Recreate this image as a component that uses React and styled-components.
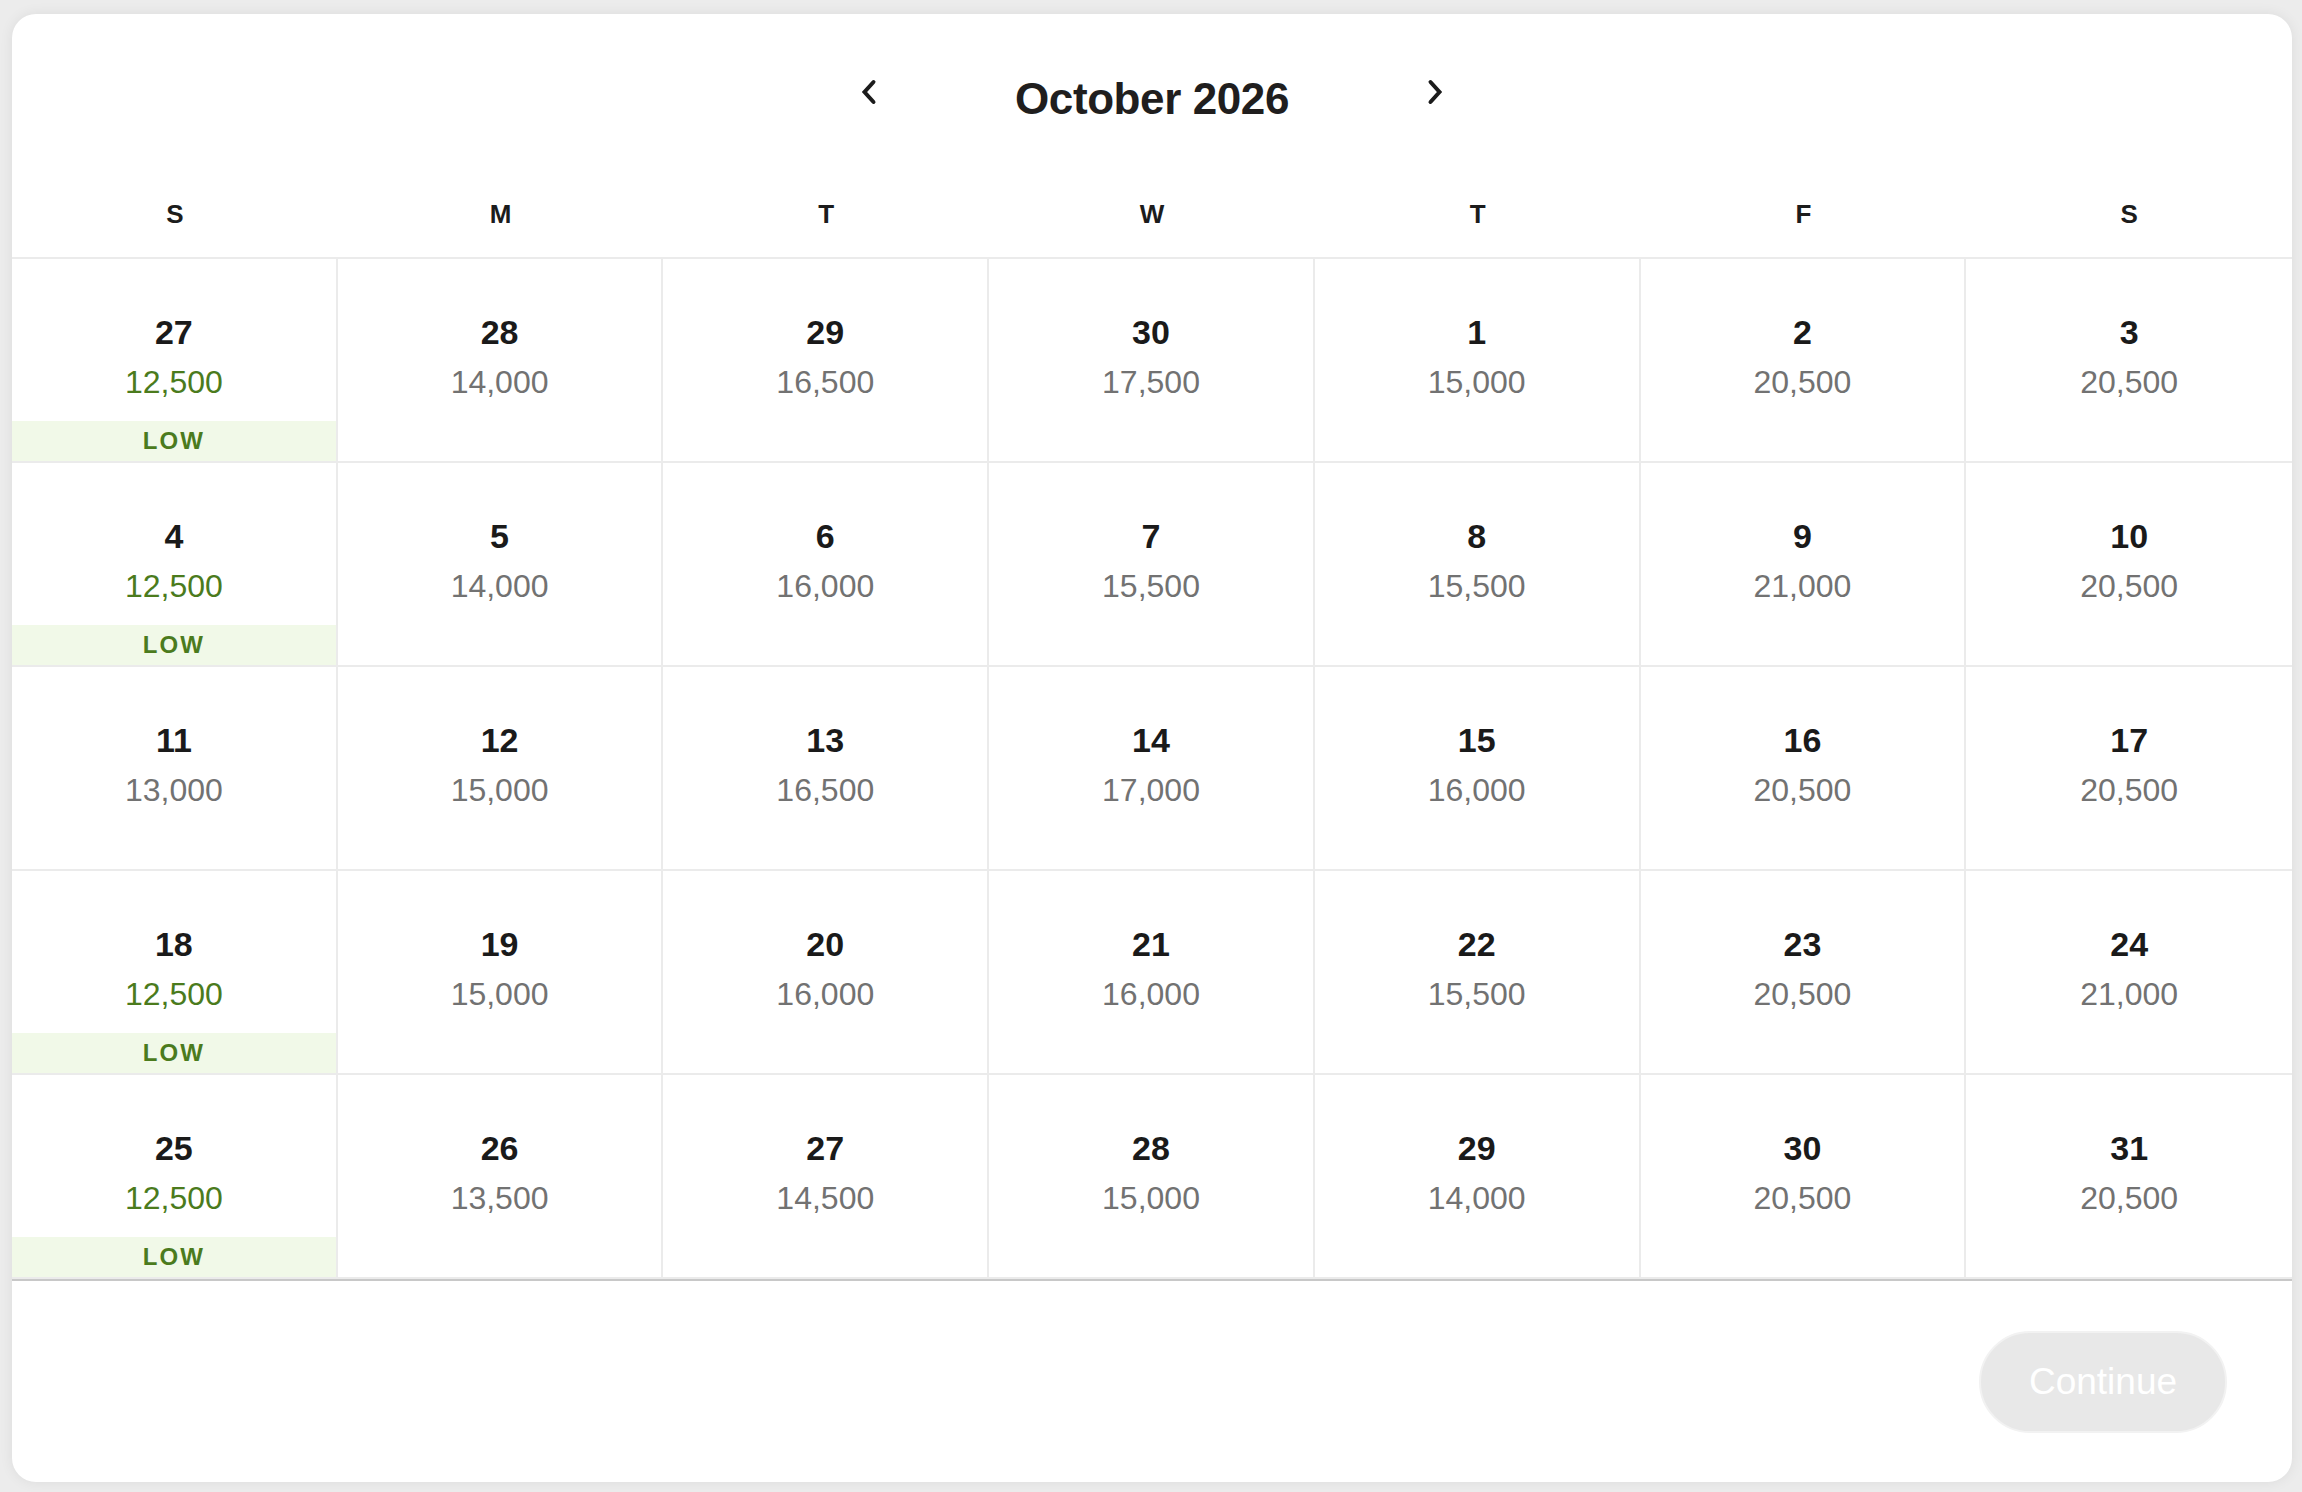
import React from 'react'
import styled, { createGlobalStyle } from 'styled-components'

const GlobalStyle = createGlobalStyle`
    html, body {
        margin: 0;
        padding: 0;
        background: #ececec;
        font-family: "Liberation Sans", Arial, Helvetica, sans-serif;
        -webkit-font-smoothing: antialiased;
    }
    * {
        box-sizing: border-box;
    }
`

const WEEKDAYS = ['S', 'M', 'T', 'W', 'T', 'F', 'S']

const WEEKS = [
    [[27, 12500, true], [28, 14000], [29, 16500], [30, 17500], [1, 15000], [2, 20500], [3, 20500]],
    [[4, 12500, true], [5, 14000], [6, 16000], [7, 15500], [8, 15500], [9, 21000], [10, 20500]],
    [[11, 13000], [12, 15000], [13, 16500], [14, 17000], [15, 16000], [16, 20500], [17, 20500]],
    [[18, 12500, true], [19, 15000], [20, 16000], [21, 16000], [22, 15500], [23, 20500], [24, 21000]],
    [[25, 12500, true], [26, 13500], [27, 14500], [28, 15000], [29, 14000], [30, 20500], [31, 20500]],
]

function Chevron({ dir }) {
    const d = dir === 'left' ? 'M12.5 3 L3.5 13 L12.5 23' : 'M3.5 3 L12.5 13 L3.5 23'
    return (
        <svg width="16" height="26" viewBox="0 0 16 26" fill="none">
            <path d={d} stroke="#1c1c1c" strokeWidth="4" strokeLinecap="round" strokeLinejoin="miter" />
        </svg>
    )
}

function App() {
    return (
        <Page>
            <GlobalStyle />
            <Card>
                <Nav>
                    <NavButton aria-label="Previous month">
                        <Chevron dir="left" />
                    </NavButton>
                    <Title>October 2026</Title>
                    <NavButton aria-label="Next month">
                        <Chevron dir="right" />
                    </NavButton>
                </Nav>

                <WeekdayRow>
                    {WEEKDAYS.map((w, i) => (
                        <Weekday key={i}>{w}</Weekday>
                    ))}
                </WeekdayRow>

                <Grid>
                    {WEEKS.map((week, r) =>
                        week.map(([day, price, low], c) => (
                            <Cell key={`${r}-${c}`} $last={c === 6}>
                                <DayNumber>{day}</DayNumber>
                                <Price $low={low}>{price.toLocaleString('en-US')}</Price>
                                {low && <LowTag>LOW</LowTag>}
                            </Cell>
                        ))
                    )}
                </Grid>

                <Footer>
                    <ContinueButton disabled>Continue</ContinueButton>
                </Footer>
            </Card>
        </Page>
    )
}

export default App

const Page = styled.div`
    min-height: 1492px;
    padding: 14px 10px 12px 12px;
`

const Card = styled.div`
    background: #ffffff;
    border-radius: 24px;
    overflow: hidden;
    box-shadow: 0 0 14px rgba(0, 0, 0, 0.07);
`

const Nav = styled.div`
    display: grid;
    grid-template-columns: 60px 506px 60px;
    justify-content: center;
    align-items: center;
    padding-top: 58px;
`

const NavButton = styled.button`
    display: flex;
    align-items: center;
    justify-content: center;
    height: 40px;
    margin-bottom: 14px;
    padding: 0;
    border: none;
    background: none;
    cursor: pointer;
`

const Title = styled.h1`
    margin: 0;
    text-align: center;
    font-size: 44px;
    line-height: 52px;
    font-weight: 700;
    letter-spacing: -0.4px;
    color: #201e1e;
`

const WeekdayRow = styled.div`
    display: grid;
    grid-template-columns: repeat(7, 1fr);
    margin-top: 72px;
    padding-bottom: 27px;
    border-bottom: 2px solid #ebebeb;
`

const Weekday = styled.div`
    text-align: center;
    font-size: 26px;
    line-height: 32px;
    font-weight: 700;
    color: #1c1c1c;
`

const Grid = styled.div`
    display: grid;
    grid-template-columns: repeat(7, 1fr);
    grid-auto-rows: 204px;
    border-bottom: 2px solid #c8c8c8;
`

const Cell = styled.div`
    display: flex;
    flex-direction: column;
    align-items: center;
    padding-top: 53px;
    border-bottom: 2px solid #ebebeb;
    border-right: ${(p) => (p.$last ? 'none' : '2px solid #ebebeb')};
`

const DayNumber = styled.div`
    font-size: 34px;
    line-height: 40px;
    font-weight: 700;
    color: #1a1a1a;
`

const Price = styled.div`
    margin-top: 10px;
    font-size: 32px;
    line-height: 40px;
    color: ${(p) => (p.$low ? '#4b7b1d' : '#727272')};
`

const LowTag = styled.div`
    align-self: stretch;
    margin-top: auto;
    height: 40px;
    display: flex;
    align-items: center;
    justify-content: center;
    background: #f1f9e8;
    color: #4b7b1d;
    font-size: 24px;
    font-weight: 700;
    letter-spacing: 2px;
`

const Footer = styled.div`
    display: flex;
    justify-content: flex-end;
    padding: 50px 65px 49px;
`

const ContinueButton = styled.button`
    width: 248px;
    height: 102px;
    border-radius: 51px;
    border: 2px solid #f2f2f2;
    background: #e8e8e8;
    color: #ffffff;
    font-family: inherit;
    font-size: 37px;
    font-weight: 400;
    cursor: default;
`
